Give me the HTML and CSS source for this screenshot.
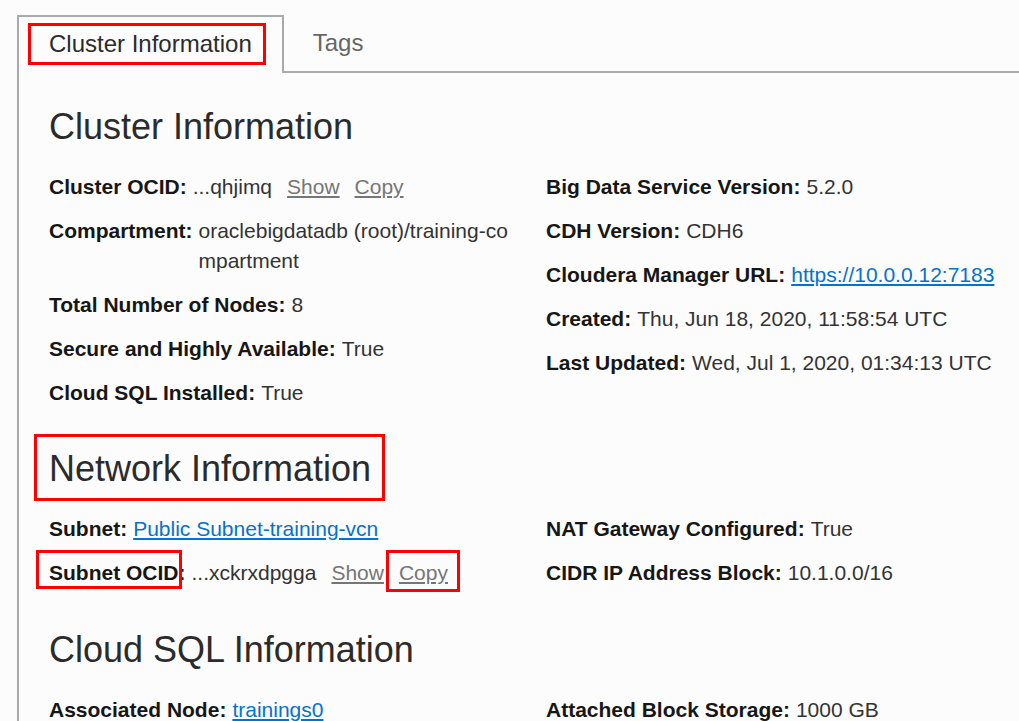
FILE: index.html
```html
<!DOCTYPE html>
<html lang="en">
<head>
<meta charset="utf-8">
<title>Cluster Information</title>
<link rel="stylesheet" href="styles.css">
</head>
<body>
<div class="page">
  <div class="tabs">
    <div class="tab tab-active"><span class="tab-label mark mark-tab">Cluster Information</span></div>
    <div class="tab tab-inactive"><span class="tab-label">Tags</span></div>
    <div class="tab-fill"></div>
  </div>
  <div class="panel">
    <section class="section">
      <h2 class="heading">Cluster Information</h2>
      <div class="grid">
        <div class="col col-left">
          <div class="row"><span class="label">Cluster OCID:</span><span class="value">...qhjimq<a class="action">Show</a><a class="action">Copy</a></span></div>
          <div class="row"><span class="label">Compartment:</span><span class="value wrap">oraclebigdatadb (root)/training-compartment</span></div>
          <div class="row"><span class="label">Total Number of Nodes:</span><span class="value">8</span></div>
          <div class="row"><span class="label">Secure and Highly Available:</span><span class="value">True</span></div>
          <div class="row"><span class="label">Cloud SQL Installed:</span><span class="value">True</span></div>
        </div>
        <div class="col col-right">
          <div class="row"><span class="label">Big Data Service Version:</span><span class="value">5.2.0</span></div>
          <div class="row"><span class="label">CDH Version:</span><span class="value">CDH6</span></div>
          <div class="row"><span class="label">Cloudera Manager URL:</span><span class="value"><a class="link">https://10.0.0.12:7183</a></span></div>
          <div class="row"><span class="label">Created:</span><span class="value">Thu, Jun 18, 2020, 11:58:54 UTC</span></div>
          <div class="row"><span class="label">Last Updated:</span><span class="value">Wed, Jul 1, 2020, 01:34:13 UTC</span></div>
        </div>
      </div>
    </section>
    <section class="section">
      <h2 class="heading"><span class="mark mark-heading">Network Information</span></h2>
      <div class="grid">
        <div class="col col-left">
          <div class="row"><span class="label">Subnet:</span><span class="value"><a class="link">Public Subnet-training-vcn</a></span></div>
          <div class="row row-ocid"><span class="label"><span class="mark mark-ocid">Subnet OCID</span>:</span><span class="value">...xckrxdpgga<a class="action">Show</a><a class="action mark mark-copy">Copy</a></span></div>
        </div>
        <div class="col col-right">
          <div class="row"><span class="label">NAT Gateway Configured:</span><span class="value">True</span></div>
          <div class="row"><span class="label">CIDR IP Address Block:</span><span class="value">10.1.0.0/16</span></div>
        </div>
      </div>
    </section>
    <section class="section">
      <h2 class="heading">Cloud SQL Information</h2>
      <div class="grid">
        <div class="col col-left">
          <div class="row"><span class="label">Associated Node:</span><span class="value"><a class="link">trainings0</a></span></div>
        </div>
        <div class="col col-right">
          <div class="row"><span class="label">Attached Block Storage:</span><span class="value">1000 GB</span></div>
        </div>
      </div>
    </section>
  </div>
</div>
</body>
</html>
```

FILE: styles.css
```css
html, body {
  margin: 0;
  padding: 0;
  background: #fcfcfc;
}
body {
  font-family: "Liberation Sans", Arial, sans-serif;
  color: #333;
  overflow: hidden;
}
.page {
  padding: 15px 0 0 17px;
}
.tabs {
  display: flex;
  align-items: stretch;
  height: 58px;
}
.tab {
  display: flex;
  align-items: center;
  box-sizing: border-box;
  font-size: 24px;
}
.tab-active {
  border: 2px solid #aaa;
  border-bottom: none;
  padding: 0 16px 2px 9px;
  color: #2b2b2b;
}
.tab-inactive {
  border-bottom: 2px solid #aaa;
  padding: 0 0 0 29px;
  color: #666;
}
.tab-fill {
  flex: 1;
  border-bottom: 2px solid #aaa;
}
.tab-label {
  line-height: 28px;
}
.mark {
  position: relative;
}
.mark::after {
  content: "";
  position: absolute;
  border: 3px solid #f00;
  pointer-events: none;
}
.mark-tab {
  display: inline-block;
  padding: 7px 14px 7px 21px;
}
.mark-tab::after {
  inset: 0;
}
.panel {
  border-left: 2px solid #aaa;
  padding: 0 0 0 30px;
  min-height: 700px;
}
.section {
  padding-top: 26px;
}
.section:first-child {
  padding-top: 33px;
}
.heading {
  margin: 0 0 24px;
  font-size: 36px;
  line-height: 42px;
  font-weight: normal;
  color: #2b2b2b;
}
.mark-heading {
  display: inline-block;
}
.mark-heading::after {
  top: -14px;
  bottom: -11px;
  left: -15px;
  right: -14px;
}
.grid {
  display: grid;
  grid-template-columns: 466px 1fr;
  column-gap: 31px;
}
.row {
  display: flex;
  font-size: 21px;
  line-height: 30px;
  margin-bottom: 14px;
}
.row-ocid {
  margin-top: 1px;
  margin-bottom: 15px;
}
.label {
  font-weight: bold;
  color: #161616;
  white-space: nowrap;
  margin-right: 6px;
}
.value {
  color: #333;
}
.wrap {
  flex: 1;
  word-break: break-all;
}
.action {
  color: #767676;
  text-decoration: underline;
  margin-left: 15px;
}
.link {
  color: #0572ce;
  text-decoration: underline;
}
.mark-ocid {
  display: inline-block;
}
.mark-ocid::after {
  top: -8px;
  bottom: -1px;
  left: -13px;
  right: -3px;
}
.mark-copy {
  display: inline-block;
}
.mark-copy::after {
  top: -8px;
  bottom: -4px;
  left: -13px;
  right: -12px;
}
```
